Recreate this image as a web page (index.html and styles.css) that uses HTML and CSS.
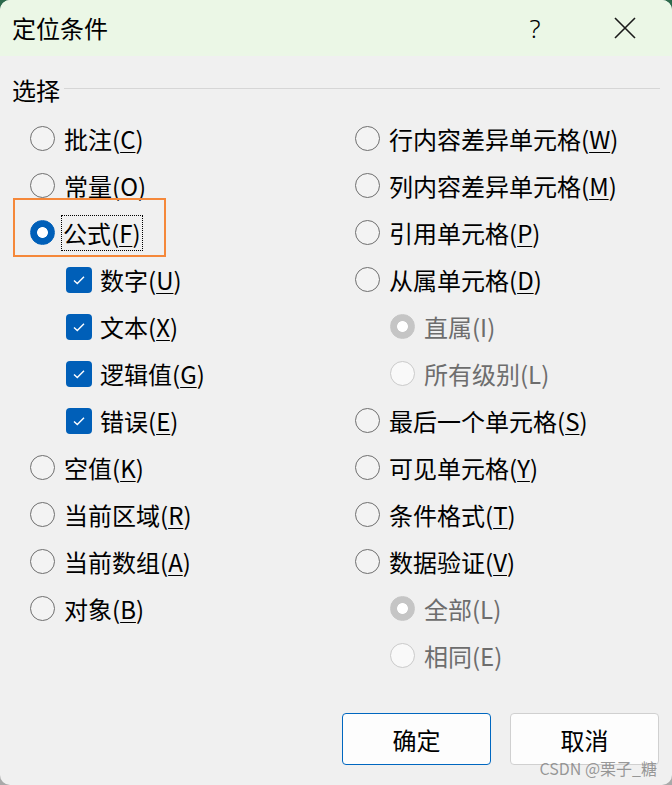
FILE: index.html
```html
<!DOCTYPE html>
<html lang="zh-CN">
<head>
<meta charset="utf-8">
<title>定位条件</title>
<link rel="stylesheet" href="styles.css">
</head>
<body>
<div class="window">
  <div class="titlebar">
    <span class="title">定位条件</span>
    <span class="tbtn help">?</span>
    <span class="tbtn close">
      <svg width="24" height="24" viewBox="0 0 24 24"><path d="M2 2 L22 22 M22 2 L2 22" stroke="#1a1a1a" stroke-width="1.6" fill="none"/></svg>
    </span>
  </div>
  <div class="content">
    <div class="legend"><span class="legend-text">选择</span><span class="legend-line"></span></div>
    <div class="grid">
      <div class="col">
        <div class="row"><span class="radio"></span><span class="lbl">批注(<u>C</u>)</span></div>
        <div class="row"><span class="radio"></span><span class="lbl">常量(<u>O</u>)</span></div>
        <div class="row"><span class="radio on"></span><span class="lbl focus">公式(<u>F</u>)</span></div>
        <div class="row sub"><span class="check"><svg width="26" height="26" viewBox="0 0 26 26"><path d="M8 13.5 L11.3 16.6 L18 9.8" stroke="#fff" stroke-width="1.4" fill="none"/></svg></span><span class="lbl">数字(<u>U</u>)</span></div>
        <div class="row sub"><span class="check"><svg width="26" height="26" viewBox="0 0 26 26"><path d="M8 13.5 L11.3 16.6 L18 9.8" stroke="#fff" stroke-width="1.4" fill="none"/></svg></span><span class="lbl">文本(<u>X</u>)</span></div>
        <div class="row sub"><span class="check"><svg width="26" height="26" viewBox="0 0 26 26"><path d="M8 13.5 L11.3 16.6 L18 9.8" stroke="#fff" stroke-width="1.4" fill="none"/></svg></span><span class="lbl">逻辑值(<u>G</u>)</span></div>
        <div class="row sub"><span class="check"><svg width="26" height="26" viewBox="0 0 26 26"><path d="M8 13.5 L11.3 16.6 L18 9.8" stroke="#fff" stroke-width="1.4" fill="none"/></svg></span><span class="lbl">错误(<u>E</u>)</span></div>
        <div class="row"><span class="radio"></span><span class="lbl">空值(<u>K</u>)</span></div>
        <div class="row"><span class="radio"></span><span class="lbl">当前区域(<u>R</u>)</span></div>
        <div class="row"><span class="radio"></span><span class="lbl">当前数组(<u>A</u>)</span></div>
        <div class="row"><span class="radio"></span><span class="lbl">对象(<u>B</u>)</span></div>
      </div>
      <div class="col">
        <div class="row"><span class="radio"></span><span class="lbl">行内容差异单元格(<u>W</u>)</span></div>
        <div class="row"><span class="radio"></span><span class="lbl">列内容差异单元格(<u>M</u>)</span></div>
        <div class="row"><span class="radio"></span><span class="lbl">引用单元格(<u>P</u>)</span></div>
        <div class="row"><span class="radio"></span><span class="lbl">从属单元格(<u>D</u>)</span></div>
        <div class="row sub"><span class="radio dis on"></span><span class="lbl dim">直属(I)</span></div>
        <div class="row sub"><span class="radio dis"></span><span class="lbl dim">所有级别(L)</span></div>
        <div class="row"><span class="radio"></span><span class="lbl">最后一个单元格(<u>S</u>)</span></div>
        <div class="row"><span class="radio"></span><span class="lbl">可见单元格(<u>Y</u>)</span></div>
        <div class="row"><span class="radio"></span><span class="lbl">条件格式(<u>T</u>)</span></div>
        <div class="row"><span class="radio"></span><span class="lbl">数据验证(<u>V</u>)</span></div>
        <div class="row sub"><span class="radio dis on"></span><span class="lbl dim">全部(L)</span></div>
        <div class="row sub"><span class="radio dis"></span><span class="lbl dim">相同(E)</span></div>
      </div>
    </div>
    <div class="buttons">
      <span class="btn primary">确定</span>
      <span class="btn">取消</span>
    </div>
  </div>
  <div class="highlight"></div>
  <div class="watermark">CSDN @栗子_糖</div>
</div>
</body>
</html>
```
FILE: styles.css
```css
html {
  background: linear-gradient(#2d6a4c 0, #2d6a4c 50%, #a9a9a9 50%, #a9a9a9 100%);
}
body {
  margin: 0;
  font-family: "Noto Sans CJK SC", "Noto Sans", sans-serif;
  color: #000;
}
.window {
  position: relative;
  width: 672px;
  height: 785px;
  border-radius: 10px;
  overflow: hidden;
  background: #f0f0f0;
}
.titlebar {
  height: 56px;
  background: #ebf7e6;
  display: flex;
  align-items: center;
  padding-left: 12px;
}
.title {
  font-size: 24px;
  line-height: 1;
  margin-top: -1px;
}
.tbtn {
  width: 48px;
  height: 40px;
  display: flex;
  align-items: center;
  justify-content: center;
}
.help {
  margin-left: auto;
  font-size: 26px;
  font-family: "Noto Sans", sans-serif;
  font-weight: 300;
}
.close {
  margin-left: 42px;
  margin-right: 23px;
}
.content {
  padding: 0 12px;
}
.legend {
  display: flex;
  align-items: center;
  height: 28px;
  margin-top: 20px;
}
.legend-text {
  font-size: 24px;
  line-height: 1;
  margin-right: 4px;
}
.legend-line {
  flex: 1;
  height: 1px;
  background: #d6d6d6;
  margin-top: -4px;
}
.grid {
  display: grid;
  grid-template-columns: 325px 1fr;
  margin-top: 11px;
  padding-left: 18px;
}
.row {
  height: 47px;
  display: flex;
  align-items: center;
}
.row.sub {
  padding-left: 35px;
}
.row.sub .check {
  margin-left: 1px;
}
.radio {
  width: 25px;
  height: 25px;
  box-sizing: border-box;
  border-radius: 50%;
  border: 1.5px solid #6f6f6f;
  background: #f3f3f3;
  margin-right: 9px;
  flex: none;
}
.radio.on {
  border-color: #005fb8;
  background: radial-gradient(circle, #fff 0, #fff 5px, #005fb8 5.8px);
}
.radio.dis {
  border-color: #cacaca;
  background: #f9f9f9;
}
.radio.dis.on {
  border-color: #c5c5c5;
  background: radial-gradient(circle, #fff 0, #fff 5px, #c5c5c5 5.8px);
}
.check {
  width: 26px;
  height: 26px;
  border-radius: 4px;
  background: #005fb8;
  margin-right: 8px;
  flex: none;
  display: flex;
}
.lbl {
  font-size: 24px;
  line-height: 32px;
  white-space: nowrap;
}
.lbl u {
  text-underline-offset: 3px;
  text-decoration-thickness: 1px;
}
.lbl.dim {
  color: #6d6d6d;
}
.lbl.focus {
  outline: 1px dotted #000;
  padding: 1px 1px;
  margin-left: -2px;
}
.buttons {
  display: flex;
  justify-content: flex-end;
  gap: 19px;
  margin-top: 34px;
  padding-right: 1px;
}
.btn {
  width: 149px;
  height: 52px;
  box-sizing: border-box;
  border: 1px solid #d0d0d0;
  border-radius: 4px;
  background: #fdfdfd;
  display: flex;
  align-items: center;
  justify-content: center;
  font-size: 24px;
}
.btn.primary {
  border-color: #0067c0;
  border-width: 1.5px;
}
.highlight {
  position: absolute;
  left: 13px;
  top: 198px;
  width: 153px;
  height: 59px;
  box-sizing: border-box;
  border: 2px solid #f5883a;
}
.watermark {
  position: absolute;
  right: 15px;
  top: 756px;
  font-size: 16px;
  line-height: 24px;
  color: rgba(120, 120, 120, 0.75);
  font-family: "Noto Sans CJK SC", "Liberation Sans", sans-serif;
}
```
